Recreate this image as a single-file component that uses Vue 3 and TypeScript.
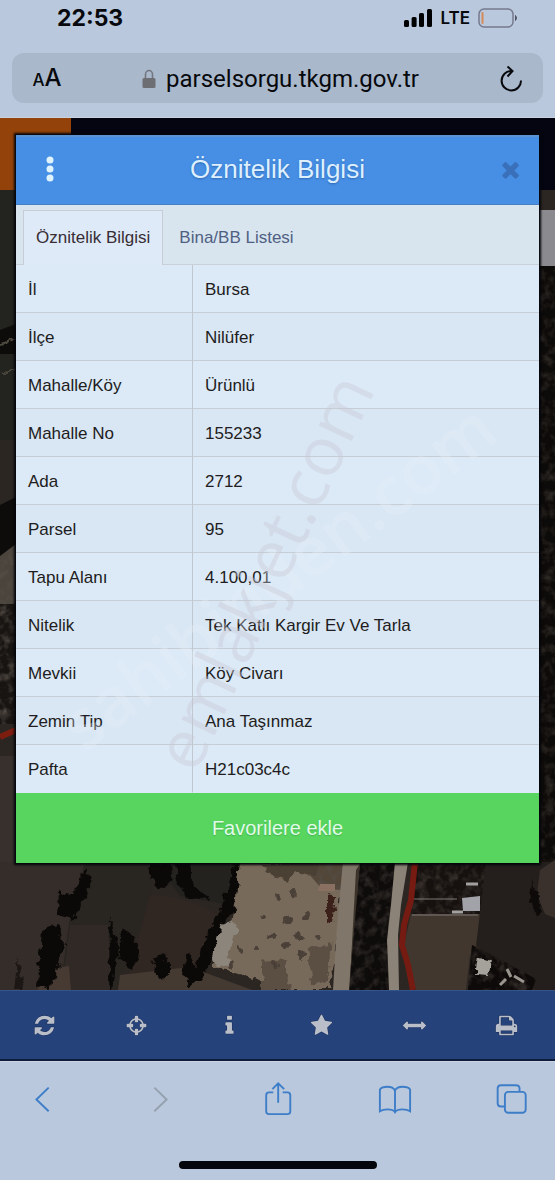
<script setup lang="ts">
import { ref } from 'vue'

interface Row {
  label: string
  value: string
}

interface Tool {
  name: string
  path: string
}

const rows: Row[] = [
  { label: 'İl', value: 'Bursa' },
  { label: 'İlçe', value: 'Nilüfer' },
  { label: 'Mahalle/Köy', value: 'Ürünlü' },
  { label: 'Mahalle No', value: '155233' },
  { label: 'Ada', value: '2712' },
  { label: 'Parsel', value: '95' },
  { label: 'Tapu Alanı', value: '4.100,01' },
  { label: 'Nitelik', value: 'Tek Katlı Kargir Ev Ve Tarla' },
  { label: 'Mevkii', value: 'Köy Civarı' },
  { label: 'Zemin Tip', value: 'Ana Taşınmaz' },
  { label: 'Pafta', value: 'H21c03c4c' },
]

const tabs: string[] = ['Öznitelik Bilgisi', 'Bina/BB Listesi']
const activeTab = ref(0)

const tools: Tool[] = [
  {
    name: 'Yenile',
    path: 'M1639 1056q0 5-1 7-64 268-268 434.5t-478 166.5q-146 0-282.5-55t-243.5-157l-129 129q-19 19-45 19t-45-19-19-45v-448q0-26 19-45t45-19h448q26 0 45 19t19 45-19 45l-137 137q71 66 161 102t187 36q134 0 250-65t186-179q11-17 53-117 8-23 30-23h192q13 0 22.5 9.5t9.5 22.5zm25-800v448q0 26-19 45t-45 19h-448q-26 0-45-19t-19-45 19-45l138-138q-148-137-349-137-134 0-250 65t-186 179q-11 17-53 117-8 23-30 23h-199q-13 0-22.5-9.5t-9.5-22.5v-7q65-268 270-434.5t480-166.5q146 0 284 55.5t245 156.5l130-129q19-19 45-19t45 19 19 45z',
  },
  {
    name: 'Konum',
    path: 'M1325 1024h-109q-26 0-45-19t-19-45v-128q0-26 19-45t45-19h109q-32-108-112.5-188.5t-188.5-112.5v109q0 26-19 45t-45 19h-128q-26 0-45-19t-19-45v-109q-108 32-188.5 112.5t-112.5 188.5h109q26 0 45 19t19 45v128q0 26-19 45t-45 19h-109q32 108 112.5 188.5t188.5 112.5v-109q0-26 19-45t45-19h128q26 0 45 19t19 45v109q108-32 188.5-112.5t112.5-188.5zm339-192v128q0 26-19 45t-45 19h-143q-37 161-154.5 278.5t-278.5 154.5v143q0 26-19 45t-45 19h-128q-26 0-45-19t-19-45v-143q-161-37-278.5-154.5t-154.5-278.5h-143q-26 0-45-19t-19-45v-128q0-26 19-45t45-19h143q37-161 154.5-278.5t278.5-154.5v-143q0-26 19-45t45-19h128q26 0 45 19t19 45v143q161 37 278.5 154.5t154.5 278.5h143q26 0 45 19t19 45z',
  },
  {
    name: 'Bilgi',
    path: 'M1216 1344v128q0 26-19 45t-45 19h-512q-26 0-45-19t-19-45v-128q0-26 19-45t45-19h64v-384h-64q-26 0-45-19t-19-45v-128q0-26 19-45t45-19h384q26 0 45 19t19 45v576h64q26 0 45 19t19 45zm-128-1152v192q0 26-19 45t-45 19h-256q-26 0-45-19t-19-45v-192q0-26 19-45t45-19h256q26 0 45 19t19 45z',
  },
  {
    name: 'Favoriler',
    path: 'M1728 647q0 22-26 48l-363 354 86 500q1 7 1 20 0 21-10.5 35.5t-30.5 14.5q-19 0-40-12l-449-236-449 236q-22 12-40 12-21 0-31.5-14.5t-10.5-35.5q0-6 2-20l86-500-364-354q-25-27-25-48 0-37 56-46l502-73 225-455q19-41 49-41t49 41l225 455 502 73q56 9 56 46z',
  },
  {
    name: 'Ölç',
    path: 'M1792 896q0 26-19 45l-256 256q-19 19-45 19t-45-19-19-45v-128h-1024v128q0 26-19 45t-45 19-45-19l-256-256q-19-19-19-45t19-45l256-256q19-19 45-19t45 19 19 45v128h1024v-128q0-26 19-45t45-19 45 19l256 256q19 19 19 45z',
  },
  {
    name: 'Yazdır',
    path: 'M448 1536h896v-256h-896v256zm0-640h896v-384h-160q-40 0-68-28t-28-68v-160h-640v640zm1152 64q0-26-19-45t-45-19-45 19-19 45 19 45 45 19 45-19 19-45zm128 0v416q0 13-9.5 22.5t-22.5 9.5h-224v160q0 40-28 68t-68 28h-960q-40 0-68-28t-28-68v-160h-224q-13 0-22.5-9.5t-9.5-22.5v-416q0-79 56.5-135.5t135.5-56.5h64v-544q0-40 28-68t68-28h672q40 0 88 20t76 48l152 152q28 28 48 76t20 88v256h64q79 0 135.5 56.5t56.5 135.5z',
  },
]
</script>

<template>
  <div class="screen">
    <header class="chrome">
      <div class="status">
        <time class="clock">22:53</time>
        <div class="signals">
          <svg class="bars" viewBox="0 0 28 18" aria-hidden="true">
            <rect x="0" y="11" width="5" height="7" rx="1.5" />
            <rect x="7.600" y="8" width="5" height="10" rx="1.500" />
            <rect x="15" y="4" width="5" height="14" rx="1.500" />
            <rect x="23" y="0" width="5" height="18" rx="1.500" />
          </svg>
          <span class="network">LTE</span>
          <svg class="battery" viewBox="0 0 40 20" aria-hidden="true">
            <rect x="1" y="1" width="34" height="18" rx="5" fill="none" stroke="#77798c" stroke-width="1.500" />
            <rect x="3.500" y="4" width="2" height="12" rx="1" fill="#d58a58" />
            <path d="M37.500 7.500q2 2.500 0 5z" fill="#4f5366" stroke="#4f5366" />
          </svg>
        </div>
      </div>
      <div class="address">
        <button class="text-size" type="button" aria-label="Metin boyutu"><span class="small-a">A</span>A</button>
        <a class="url" href="#">
          <svg class="lock" viewBox="0 0 14 20" aria-hidden="true">
            <path d="M3.500 10V5.500a3.500 4 0 0 1 7 0V10" fill="none" stroke="#73767e" stroke-width="1.600" />
            <rect x="0.500" y="9" width="13" height="10" rx="1.500" fill="#6c6e73" />
          </svg>
          <span>parselsorgu.tkgm.gov.tr</span>
        </a>
        <button class="reload" type="button" aria-label="Yenile">
          <svg viewBox="0 0 24 28" aria-hidden="true">
            <path d="M12.500 6A9.700 9.700 0 1 0 22 15.500M8.500 1.500l5 4.500-5 5.500" />
          </svg>
        </button>
      </div>
    </header>

    <main class="page">
      <svg class="map" viewBox="0 118 555 872" preserveAspectRatio="xMidYMax slice" aria-hidden="true">
        <defs>
          <filter id="ragged" x="-5%" y="-5%" width="110%" height="110%" color-interpolation-filters="sRGB">
            <feTurbulence type="fractalNoise" baseFrequency="0.12" numOctaves="3" seed="4" result="n" />
            <feDisplacementMap in="SourceGraphic" in2="n" scale="10" xChannelSelector="R" yChannelSelector="G" />
          </filter>
          <filter id="foliage" x="0" y="0" width="100%" height="100%" color-interpolation-filters="sRGB">
            <feTurbulence type="fractalNoise" baseFrequency="0.11" numOctaves="3" seed="9" result="n" />
            <feColorMatrix in="n" values="0 0 0 0 0.34  0 0 0 0 0.31  0 0 0 0 0.28  2.200 0 0 0 -0.950" result="c" />
            <feComposite in="c" in2="SourceGraphic" operator="in" result="t" />
            <feMerge>
              <feMergeNode in="SourceGraphic" />
              <feMergeNode in="t" />
            </feMerge>
          </filter>
        </defs>
        <rect y="118" width="555" height="872" fill="#2c2623" />

        <path d="M0 190H16V440H0z" fill="#23231f" />
        <path d="M0 330l16-6v30H0zM0 505l16-8v60H0z" fill="#0d0c0b" />
        <path d="M0 344l16-6M0 374l16-5" stroke="#4d493f" stroke-width="2" filter="url(#ragged)" />
        <path d="M0 556l16-12v58l-16 10z" fill="#4a443d" filter="url(#foliage)" />
        <path d="M0 604h16v120H0z" fill="#171412" filter="url(#foliage)" />
        <path d="M0 737l16-7" stroke="#7c1d10" stroke-width="6" />
        <path d="M0 756h16v110H0z" fill="#37302d" />

        <rect x="539" y="266" width="16" height="600" fill="#0f0c0a" filter="url(#foliage)" />
        <rect x="539" y="266" width="16" height="600" fill="#0b0908" opacity="0.5" />

        <path d="M0 862H85L60 990H0z" fill="#352d29" />
        <path d="M85 862H155L150 900 116 990H60L70 915z" fill="#292521" />
        <path d="M70 925l38 0 4 65H62z" fill="#302926" />
        <path d="M150 895q40 2 68 20l-12 45-26 30H125z" fill="#302723" />
        <path d="M155 862H238L228 905 180 896z" fill="#24221f" />
        <path d="M120 975l70-8 62 23H118z" fill="#443a32" />
        <path d="M44 970l25-4 2 24H38z" fill="#463a32" />

        <g filter="url(#ragged)" fill="#0b0908">
          <path d="M84 870l8 8-9 24-10 18-15-6 1-24 13 6z" />
          <path d="M42 930l16-6 6 20-8 32-8 14-10-4z" />
          <path d="M110 915l8 30-5 45-4-8z" />
          <path d="M122 928l10 6 8 26-8 8-14-10z" />
          <path d="M150 864h20l2 18-12 6-10-10z" />
          <path d="M176 864h14l4 22 16 14-20-2-12-12z" />
          <path d="M234 864h8l-6 42-14 20-10 32-6 14-10-6 10-30 18-36z" />
          <path d="M152 960l10-8 8 10 0 14-12 2zM184 960l6-8 6 16 8-6 2 12-16 14-8-14z" />
          <path d="M18 955l6 35h-10z" opacity="0.6" />
        </g>

        <path d="M240 862H345L335 960 328 990H285L258 978 212 968 218 942 232 924 237 890z" fill="#786a5a" filter="url(#ragged)" />
        <path d="M222 925l12-4 3 10-10 22 4 12-14 2-5-8z" fill="#8b857b" filter="url(#ragged)" />
        <path d="M300 864h46v26l-24-1z" fill="#514638" filter="url(#foliage)" />
        <path d="M260 864h58l-2 12-22-4-6 10-14-4z" fill="#4b4034" filter="url(#ragged)" />
        <path d="M262 962l24-2 4 30h-28zM308 948l24-6-6 40-14 2z" fill="#5b4f44" filter="url(#ragged)" />
        <path d="M320 884h15v7h-17z" fill="#8a7060" />
        <path d="M326 895l10 2-4 26-6-2z" fill="#3c211b" filter="url(#ragged)" />
        <g fill="#4a4038" filter="url(#ragged)">
          <ellipse cx="287" cy="920" rx="5" ry="4" />
          <ellipse cx="263" cy="918" rx="3" ry="3" />
          <ellipse cx="279" cy="896" rx="3" ry="4" />
          <ellipse cx="293" cy="892" rx="2" ry="4" />
          <ellipse cx="307" cy="916" rx="4" ry="2" />
          <ellipse cx="272" cy="935" rx="3" ry="3" />
          <ellipse cx="299" cy="936" rx="4" ry="4" />
          <ellipse cx="287" cy="945" rx="4" ry="3" />
          <ellipse cx="300" cy="954" rx="4" ry="4" />
          <ellipse cx="257" cy="948" rx="2" ry="3" />
          <ellipse cx="240" cy="950" rx="2" ry="3" />
          <ellipse cx="275" cy="965" rx="4" ry="3" />
          <ellipse cx="230" cy="966" rx="3" ry="3" />
          <ellipse cx="318" cy="936" rx="2" ry="2" />
        </g>

        <path d="M358 862H396L388 925 389 990H346L352 925z" fill="#100d0c" filter="url(#foliage)" />
        <path d="M358 862H396L388 925 389 990H346L352 925z" fill="#0d0b0a" opacity="0.45" />
        <path d="M343 862H360L355 910 349 990H333L337 925z" fill="#807669" />
        <path d="M356 870l4-6-5 56-5 60z" fill="#3c342b" />
        <path d="M395 862H408L401 905 398 935 399 990H389L387 940 391 905z" fill="#8c8378" />

        <path d="M414 862H488L484 918H411z" fill="#171210" filter="url(#foliage)" />
        <path d="M414 862H488L484 918H411z" fill="#171210" opacity="0.4" />
        <path d="M411 914H490V945L470 955 466 990H416L404 945z" fill="#41372e" />
        <path d="M486 862H555V990H535L476 946z" fill="#241f1c" />
        <path d="M540 870l15-10v58l-10-4-8-20z" fill="#3a312d" />
        <path d="M532 880l-2 24 8 12 3-6-5-16z" fill="#0d0a09" filter="url(#ragged)" />
        <path d="M413 899h44M412 915h66" stroke="#7e7874" stroke-width="1" />
        <path d="M462 898l18-2v15h-17z" fill="#a2a3a8" />
        <path d="M452 912h11M466 884h12" stroke="#a3a1a0" stroke-width="3" />
        <path d="M472 945l12 6 52 28-4 11H468z" fill="#0e0b0a" filter="url(#foliage)" />
        <path d="M472 945l12 6 52 28-4 11H468z" fill="#0e0b0a" opacity="0.4" />
        <path d="M478 958l14 3-3 14-14-1z" fill="#a5a19b" filter="url(#ragged)" />
        <path d="M507 969l4 8M514 976l10 6M500 985l6-6" stroke="#9b958f" stroke-width="3" />
        <path d="M415 862L411 900 404 925 402 945 408 965 413 990" fill="none" stroke="#761b12" stroke-width="6" />

        <rect y="118" width="555" height="72" fill="#040511" />
        <rect y="118" width="71" height="72" fill="#934309" />
        <rect x="536" y="210" width="19" height="56" fill="#8b8a8e" />
      </svg>

      <section class="dialog" aria-labelledby="dialog-title">
        <div class="dialog-head">
          <button class="icon-button menu" type="button" aria-label="Menü">
            <svg class="dots" viewBox="0 0 8 26" aria-hidden="true">
              <circle cx="4" cy="4" r="3.500" />
              <circle cx="4" cy="13" r="3.500" />
              <circle cx="4" cy="22" r="3.500" />
            </svg>
          </button>
          <h1 id="dialog-title">Öznitelik Bilgisi</h1>
          <button class="icon-button dismiss" type="button" aria-label="Kapat">
            <svg class="close" viewBox="0 0 1792 1792" aria-hidden="true">
              <path d="M1490 1322q0 40-28 68l-136 136q-28 28-68 28t-68-28l-294-294-294 294q-28 28-68 28t-68-28l-136-136q-28-28-28-68t28-68l294-294-294-294q-28-28-28-68t28-68l136-136q28-28 68-28t68 28l294 294 294-294q28-28 68-28t68 28l136 136q28 28 28 68t-28 68l-294 294 294 294q28 28 28 68z" />
            </svg>
          </button>
        </div>

        <div class="tabs" role="tablist">
          <button
            v-for="(tab, i) in tabs"
            :key="tab"
            type="button"
            role="tab"
            class="tab"
            :class="{ active: i === activeTab }"
            :aria-selected="i === activeTab"
            @click="activeTab = i"
          >{{ tab }}</button>
        </div>

        <div class="table-wrap">
          <table>
            <tbody>
              <tr v-for="row in rows" :key="row.label">
                <th scope="row">{{ row.label }}</th>
                <td>{{ row.value }}</td>
              </tr>
            </tbody>
          </table>
          <svg class="watermark" viewBox="0 0 523 528" aria-hidden="true">
            <text class="mark-light" transform="translate(68 488) rotate(-37)">sahibinden.com</text>
            <text class="mark-dark" transform="translate(180 510) rotate(-65)">emlakjet.com</text>
          </svg>
        </div>

        <button class="favorite" type="button">Favorilere ekle</button>
      </section>
    </main>

    <nav class="toolbar" aria-label="Harita araçları">
      <button v-for="tool in tools" :key="tool.name" type="button" :aria-label="tool.name">
        <svg viewBox="0 0 1792 1792" aria-hidden="true"><path :d="tool.path" /></svg>
      </button>
    </nav>

    <footer class="browser-bar">
      <div class="browser-actions">
        <button type="button" aria-label="Geri">
          <svg viewBox="0 0 32 36"><path d="M22 6L9 18.500 22 31" /></svg>
        </button>
        <button type="button" aria-label="İleri" class="disabled" disabled>
          <svg viewBox="0 0 32 36"><path d="M10 6l13 12.500L10 31" /></svg>
        </button>
        <button type="button" aria-label="Paylaş">
          <svg viewBox="0 0 32 36">
            <path d="M11 11H6.500Q3.500 11 3.500 14V31Q3.500 34 6.500 34H26Q29 34 29 31V14Q29 11 26 11H21M16.200 22V2M10 7.500L16.200 1.500 22.500 7.500" />
          </svg>
        </button>
        <button type="button" aria-label="Yer imleri">
          <svg viewBox="0 0 34 36">
            <path d="M17 9Q15 5 9 5 3 5 1 8V31Q4 29 9 29 15 29 17 32 19 29 25 29 30 29 33 31V8Q31 5 25 5 19 5 17 9V31" />
          </svg>
        </button>
        <button type="button" aria-label="Sekmeler">
          <svg viewBox="0 0 32 36">
            <rect x="8.500" y="10.500" width="22" height="22" rx="3.500" />
            <path d="M8 26H4.500Q0.800 26 0.800 22.500V7Q0.800 3.500 4.500 3.500H20Q24 3.500 24 7V10" />
          </svg>
        </button>
      </div>
      <div class="home-indicator"></div>
    </footer>
  </div>
</template>

<style>
body {
  background: #b9c8dc;
}
</style>

<style scoped>
* {
  box-sizing: border-box;
}

.screen {
  display: flex;
  flex-direction: column;
  min-height: 100vh;
  font-family: "Liberation Sans", Arial, sans-serif;
  background: #b9c8dc;
}

button {
  margin: 0;
  padding: 0;
  border: 0;
  background: none;
  font: inherit;
  color: inherit;
  cursor: pointer;
}

svg {
  display: block;
}

.chrome {
  padding: 0 12px 14px;
  font-family: Inter, "Liberation Sans", sans-serif;
  color: #08090d;
  border-bottom: 1px solid #c9d3e0;
}

.status {
  display: flex;
  justify-content: space-between;
  align-items: center;
  height: 35px;
  margin-bottom: 18px;
  padding: 0 25px 0 45px;
}

.clock {
  font-size: 23px;
  font-weight: 700;
  line-height: 34px;
}

.signals {
  display: flex;
  align-items: center;
  gap: 8px;
}

.bars {
  width: 28px;
  height: 18px;
}

.network {
  font-size: 17px;
  font-weight: 600;
}

.battery {
  width: 40px;
  height: 20px;
}

.address {
  display: flex;
  align-items: center;
  justify-content: space-between;
  height: 50px;
  padding: 1px 20px 0;
  border-radius: 12px;
  background: #a9b8cb;
}

.text-size {
  width: 30px;
  font-size: 24px;
  font-weight: 500;
  line-height: 30px;
  white-space: nowrap;
}

.small-a {
  font-size: 17px;
}

.url {
  display: flex;
  align-items: center;
  gap: 10px;
  font-family: Roboto, "Liberation Sans", sans-serif;
  font-size: 24px;
  line-height: 32px;
  color: inherit;
  text-decoration: none;
}

.lock {
  width: 14px;
  height: 20px;
}

.reload svg {
  width: 24px;
  height: 28px;
  fill: none;
  stroke: #08090d;
  stroke-width: 2;
}

.page {
  position: relative;
  flex: 1;
  padding: 17px 16px 127px;
  overflow: hidden;
}

.map {
  position: absolute;
  inset: 0;
  width: 100%;
  height: 100%;
}

.dialog {
  position: relative;
  background: #dce9f7;
  box-shadow: 0 0 2px 2px #05060c;
}

.dialog-head {
  display: flex;
  align-items: center;
  justify-content: space-between;
  height: 70px;
  padding-bottom: 3px;
  background: #478fe4;
  border-top: 2px solid #5a92d3;
  border-bottom: 1px solid #487fc1;
}

h1 {
  margin: 0;
  font-size: 26px;
  font-weight: 400;
  line-height: 32px;
  color: #def0ff;
  text-shadow: 0 1px 2px #2f69b4;
}

.icon-button {
  display: flex;
  align-items: center;
  width: 52px;
  height: 34px;
}

.menu {
  justify-content: flex-start;
  padding-left: 30px;
}

.dismiss {
  justify-content: flex-end;
  padding-right: 16px;
}

.dots {
  width: 8px;
  height: 26px;
  fill: #dff3ff;
}

.close {
  width: 25px;
  height: 25px;
  fill: #3a6fba;
}

.tabs {
  display: flex;
  height: 60px;
  padding: 5px 7px 0;
  background: #d8e5ef;
  border-bottom: 1px solid #c9d0d8;
}

.tab {
  padding: 0 12px;
  border: 1px solid transparent;
  border-bottom: 0;
  font-size: 17px;
  line-height: 54px;
  color: #506082;
}

.tab + .tab {
  padding-left: 15px;
}

.tab.active {
  margin-bottom: -1px;
  border-color: #c6cdd6;
  background: #deeaf8;
  color: #382d34;
}

.table-wrap {
  position: relative;
}

table {
  width: 100%;
  border-spacing: 0;
  table-layout: fixed;
}

th,
td {
  height: 48px;
  padding: 3px 12px 0;
  border-bottom: 1px solid #c7cdd4;
  font-size: 17px;
  font-weight: 400;
  line-height: 20px;
  text-align: left;
  color: #211c20;
}

th {
  width: 177px;
  border-right: 1px solid #c1c7ce;
}

tr:nth-child(even) {
  background: #d9e6f4;
}

tr:last-child > * {
  border-bottom-color: transparent;
}

.watermark {
  position: absolute;
  inset: 0;
  width: 100%;
  height: 100%;
  pointer-events: none;
}

.mark-light {
  font: 600 68px "Open Sans", "Liberation Sans", sans-serif;
  fill: #eaf2fb;
  opacity: 0.3;
}

.mark-dark {
  font: 400 68px "Open Sans", "Liberation Sans", sans-serif;
  fill: #c8cad4;
  opacity: 0.4;
}

.favorite {
  display: block;
  width: 100%;
  height: 70px;
  background: #57d55e;
  font-size: 20px;
  color: #e0fbe8;
  text-shadow: 0 1px 1px #46b452;
}

.toolbar {
  display: grid;
  grid-template-columns: repeat(6, 1fr);
  height: 71px;
  background: #25427a;
  border-top: 1px solid #35558a;
  border-bottom: 2px solid #0f1c3c;
}

.toolbar button {
  display: grid;
  place-items: center;
  padding-right: 4px;
}

.toolbar svg {
  width: 23px;
  height: 23px;
  fill: #b9bec9;
  stroke: #1a2a50;
  stroke-width: 60;
  paint-order: stroke;
}

.browser-bar {
  height: 119px;
  padding: 20px 26px 11px;
  display: flex;
  flex-direction: column;
  justify-content: space-between;
  align-items: center;
  border-top: 1px solid #c8d4e2;
}

.browser-actions {
  display: flex;
  justify-content: space-between;
  width: 100%;
}

.browser-actions svg {
  width: 34px;
  height: 34px;
  fill: none;
  stroke: #3e7dc8;
  stroke-width: 2;
}

.browser-actions .disabled svg {
  stroke: #95a1b0;
}

.home-indicator {
  width: 198px;
  height: 8px;
  border-radius: 4px;
  background: #05060b;
}
</style>
